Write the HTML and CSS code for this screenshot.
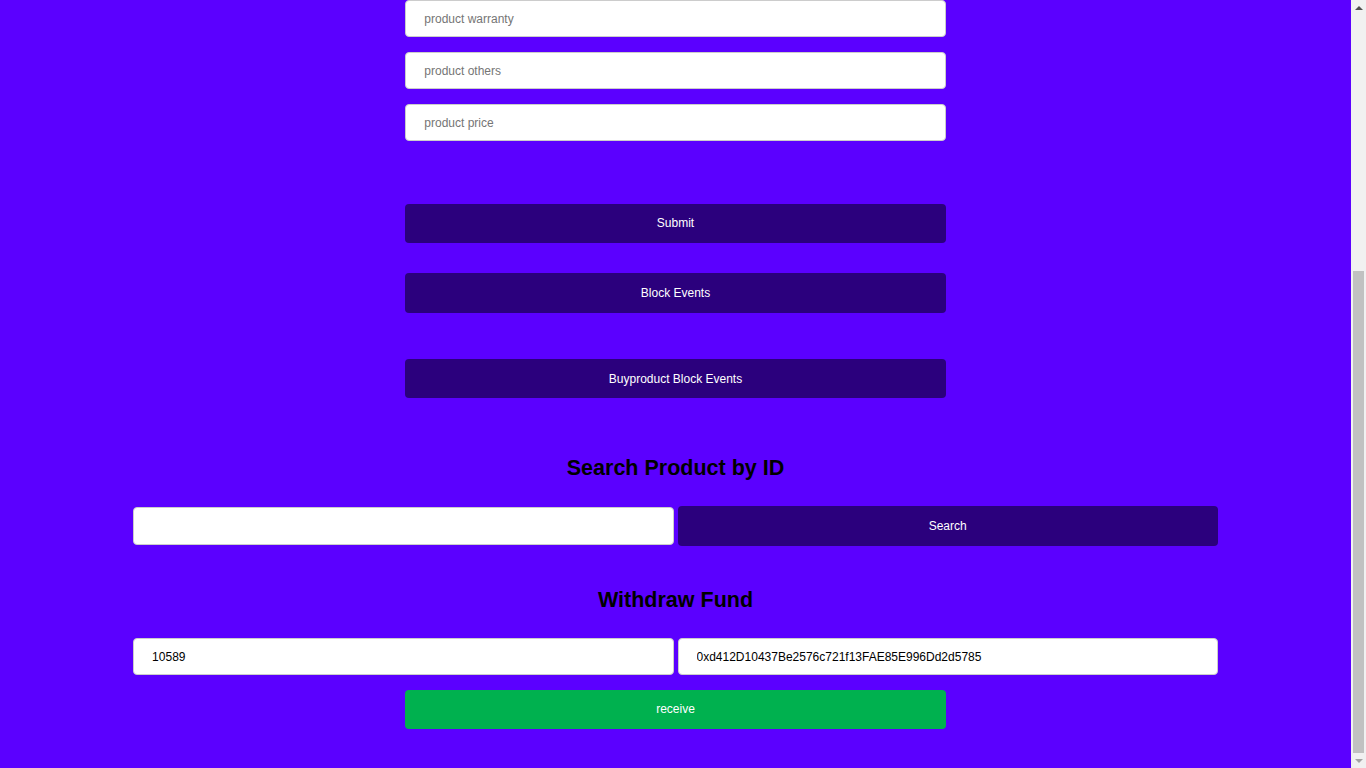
FILE: index.html
```html
<!DOCTYPE html>
<html lang="en">
<head>
<meta charset="utf-8">
<title>Product Registry</title>
<link rel="stylesheet" href="styles.css">
</head>
<body>
<div class="window">
  <main class="page">
    <section class="product-form">
      <input class="field" type="text" placeholder="product warranty">
      <input class="field" type="text" placeholder="product others">
      <input class="field" type="text" placeholder="product price">
      <button class="btn btn-dark btn-submit" type="button">Submit</button>
      <button class="btn btn-dark btn-events" type="button">Block Events</button>
      <button class="btn btn-dark btn-buy" type="button">Buyproduct Block Events</button>
    </section>

    <section class="search">
      <h2 class="title search-title">Search Product by ID</h2>
      <div class="row">
        <input class="field field-half field-search" type="text">
        <button class="btn btn-dark btn-half btn-search" type="button">Search</button>
      </div>
    </section>

    <section class="withdraw">
      <h2 class="title withdraw-title">Withdraw Fund</h2>
      <div class="row row-withdraw">
        <input class="field field-half" type="text" value="10589">
        <input class="field field-half" type="text" value="0xd412D10437Be2576c721f13FAE85E996Dd2d5785">
      </div>
      <button class="btn btn-green" type="button">receive</button>
    </section>
  </main>

  <div class="scrollbar" aria-hidden="true">
    <div class="sb-arrow sb-up"><span class="tri tri-up"></span></div>
    <div class="sb-track"><div class="sb-thumb"></div></div>
    <div class="sb-arrow sb-down"><span class="tri tri-down"></span></div>
  </div>
</div>
</body>
</html>
```

FILE: styles.css
```css
* {
  box-sizing: border-box;
}

html, body {
  margin: 0;
  padding: 0;
  height: 100%;
  overflow: hidden;
}

body {
  font-family: "Liberation Sans", Arial, sans-serif;
  background: #5b00ff;
}

.window {
  height: 100vh;
  display: flex;
  background: #5b00ff;
}

.page {
  flex: 1;
  display: flex;
  flex-direction: column;
  align-items: center;
  padding-bottom: 39px;
}

.product-form {
  width: 100%;
  display: flex;
  flex-direction: column;
  align-items: center;
  gap: 15px;
}

.title {
  margin: 0;
  font-size: 21.5px;
  line-height: 25px;
  font-weight: bold;
  color: #000;
  text-align: center;
}

.field {
  width: 40%;
  height: 37px;
  padding: 0 18px;
  border: 1px solid #ccc;
  border-radius: 4px;
  background: #fff;
  font-family: "Liberation Sans", Arial, sans-serif;
  font-size: 12px;
  color: #000;
  outline: none;
}

.field::placeholder {
  color: #757575;
}

.btn {
  width: 40%;
  height: 39px;
  border: none;
  border-radius: 4px;
  font-family: "Liberation Sans", Arial, sans-serif;
  font-size: 12px;
  color: #fff;
  cursor: pointer;
}

.btn-dark {
  background: #2b007d;
}

.btn-green {
  background: #00b14f;
  margin-top: 15px;
  padding-bottom: 2px;
}

.btn-submit {
  margin-top: 48px;
  padding-bottom: 2px;
}

.btn-events {
  margin-top: 15px;
  height: 40px;
}

.btn-buy {
  margin-top: 31px;
}

.search,
.withdraw {
  width: 100%;
  display: flex;
  flex-direction: column;
  align-items: center;
}

.search-title {
  margin-top: 58px;
}

.withdraw-title {
  margin-top: 42px;
}

.row {
  width: 100%;
  display: flex;
  justify-content: center;
  align-items: center;
  gap: 4px;
  margin-top: 25px;
  height: 40px;
}

.row-withdraw {
  height: 37px;
}

.field-half {
  width: 40%;
}

.field-search {
  height: 38px;
}

.btn-half {
  width: 40%;
  height: 40px;
}

/* decorative scrollbar (page was captured scrolled to the bottom) */
.scrollbar {
  width: 15px;
  flex-shrink: 0;
  display: flex;
  flex-direction: column;
  background: #f1f1f1;
}

.sb-arrow {
  height: 15px;
  display: flex;
  align-items: center;
  justify-content: center;
}

.tri {
  width: 0;
  height: 0;
  border-left: 4px solid transparent;
  border-right: 4px solid transparent;
}

.tri-up {
  border-bottom: 4px solid #505050;
}

.tri-down {
  border-top: 4px solid #a3a3a3;
}

.sb-track {
  flex: 1;
  padding: 256px 2px 0;
}

.sb-thumb {
  height: 482px;
  background: #c1c1c1;
}
```
